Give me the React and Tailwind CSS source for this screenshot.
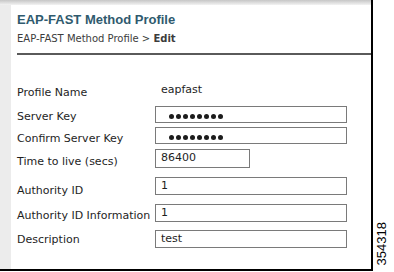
const dejavu = "font-['DejaVu_Sans',sans-serif]";

function Dots() {
  return (
    <div className="flex items-center gap-[2px] pl-[8px] pt-[3px]">
      {[0, 1, 2, 3, 4, 5, 6, 7].map((i) => (
        <span key={i} className="block w-[5px] h-[5px] rounded-full bg-[#1c1c1c]" />
      ))}
    </div>
  );
}

function Field({ label, labelPad, height, box, width = "w-[192px]", children }) {
  return (
    <div className={`flex items-start ${height}`}>
      <div className={`w-[138px] ${labelPad} text-[11px] leading-[13px] text-[#1e1e1e] whitespace-nowrap`}>
        {label}
      </div>
      <div className={`${width} ${box} border border-[#7a7a7a] bg-white flex items-center pl-[5px] text-[11px] text-[#1e1e1e]`}>
        {children}
      </div>
    </div>
  );
}

export default function App() {
  return (
    <div className={`w-[394px] h-[272px] bg-white flex ${dejavu}`}>
      <div className="w-[373px] h-[271px] border-r-2 border-b-2 border-black flex flex-col">
        <div className="h-[5px] bg-gradient-to-b from-[#c6c6c6] to-[#f3f3f3]" />
        <div className="flex flex-1">
          <div className="w-[11px] bg-[#ececec]" />
          <div className="flex-1 pl-[6px] pt-[7px]">
            <h1 className="font-['Liberation_Sans',sans-serif] font-bold text-[13px] leading-[15px] text-[#2f5a6e]">
              EAP-FAST Method Profile
            </h1>
            <div className="mt-[6px] text-[10px] leading-[12px] text-[#3c3c3c]">
              EAP-FAST Method Profile &gt; <span className="font-bold">Edit</span>
            </div>
            <div className="mt-[8px] h-[2px] bg-[#5a5a5a]" />

            <div className="mt-[28px] flex flex-col">
              <div className="flex items-start h-[23px]">
                <div className="w-[138px] pt-[3px] text-[11px] leading-[13px] text-[#1e1e1e]">Profile Name</div>
                <div className="pl-[6px] text-[11px] leading-[13px] text-[#1e1e1e]">eapfast</div>
              </div>
              <Field label="Server Key" labelPad="pt-[4px]" height="h-[21px]" box="h-[17px]">
                <Dots />
              </Field>
              <Field label="Confirm Server Key" labelPad="pt-[5px]" height="h-[22px]" box="h-[17px]">
                <Dots />
              </Field>
              <Field label="Time to live (secs)" labelPad="pt-[6px]" height="h-[28px]" box="h-[19px]" width="w-[95px]">
                86400
              </Field>
              <Field label="Authority ID" labelPad="pt-[7px]" height="h-[27px]" box="h-[18px]">
                1
              </Field>
              <Field label="Authority ID Information" labelPad="pt-[5px]" height="h-[26px]" box="h-[18px]">
                1
              </Field>
              <Field label="Description" labelPad="pt-[3px]" height="h-[18px]" box="h-[18px]">
                test
              </Field>
            </div>
          </div>
        </div>
      </div>
      <div className="flex-1 flex items-end pl-[2px] pb-[7px]">
        <span className="font-['Liberation_Sans',sans-serif] text-[13px] leading-[13px] text-black [writing-mode:vertical-rl] rotate-180">
          354318
        </span>
      </div>
    </div>
  );
}
